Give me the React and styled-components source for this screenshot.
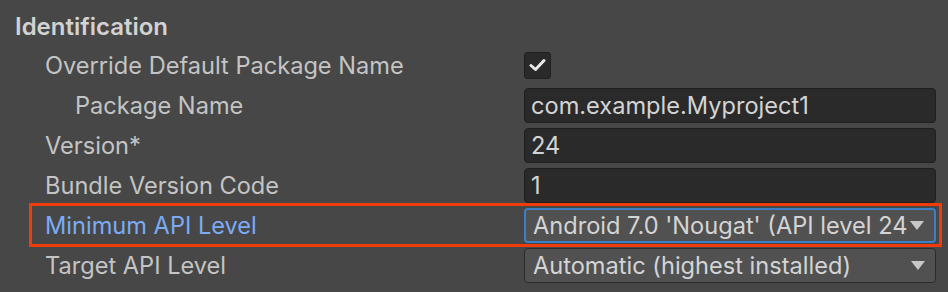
import React from "react";
import styled, { createGlobalStyle, css } from "styled-components";

const GlobalStyle = createGlobalStyle`
  html, body {
    margin: 0;
    padding: 0;
    background: #474747;
  }
  body {
    font-family: Inter, "Noto Sans", "Liberation Sans", sans-serif;
    color: #c4c4c4;
  }
`;

const Panel = styled.div`
  width: 948px;
  height: 292px;
  box-sizing: border-box;
  padding: 7px 0 0 0;
  background: #474747;
  overflow: hidden;
`;

const Header = styled.div`
  height: 38px;
  display: flex;
  align-items: center;
  padding-left: 15px;
  font-size: 24px;
  font-weight: 600;
  color: #d2d2d2;
`;

const Rows = styled.div`
  display: flex;
  flex-direction: column;
  margin-left: 31px;
  width: 909px;
`;

const Row = styled.div`
  height: 40px;
  display: grid;
  grid-template-columns: 493px minmax(0, 1fr);
  align-items: center;
  padding-right: 4px;
  ${(p) =>
    p.$highlight &&
    css`
      outline: 3px solid #f03c0a;
      outline-offset: -1px;
    `}
`;

const Label = styled.div`
  padding-left: ${(p) => 14 + (p.$indent || 0) * 30}px;
  font-size: 23.6px;
  color: ${(p) => (p.$active ? "#7babf5" : "#c4c4c4")};
  white-space: nowrap;
`;

const TextField = styled.div`
  height: 35px;
  box-sizing: border-box;
  display: flex;
  align-items: center;
  padding-left: 6px;
  background: #2a2a2a;
  border: 1px solid #1f1f1f;
  border-radius: 4px;
  font-size: 23.6px;
  color: #d4d4d4;
  white-space: nowrap;
  overflow: hidden;
`;

const Checkbox = styled.div`
  width: 27px;
  height: 27px;
  box-sizing: border-box;
  display: flex;
  align-items: center;
  justify-content: center;
  background: #2a2a2a;
  border: 1px solid #202020;
  border-radius: 3px;
`;

const Dropdown = styled.div`
  min-width: 0;
  height: 35px;
  box-sizing: border-box;
  display: flex;
  align-items: center;
  padding: 0 10px 0 ${(p) => (p.$focused ? 7 : 8)}px;
  background: #515151;
  border: ${(p) => (p.$focused ? "2px solid #3c7fc6" : "1px solid #2b2b2b")};
  border-radius: 4px;
  font-size: 23.6px;
  color: #d4d4d4;
`;

const DropdownText = styled.span`
  flex: 1;
  min-width: 0;
  white-space: nowrap;
`;

const Arrow = styled.svg`
  flex: none;
  width: 14px;
  height: 9px;
  margin-left: 3px;
`;

function Check() {
  return (
    <svg width="17" height="14" viewBox="0 0 17 14">
      <path
        d="M2 7.5 L6.5 11.5 L15 2.5"
        fill="none"
        stroke="#e8e8e8"
        strokeWidth="3"
        strokeLinecap="round"
        strokeLinejoin="round"
      />
    </svg>
  );
}

function DownArrow() {
  return (
    <Arrow viewBox="0 0 14 9">
      <path d="M0 0 H14 L7 9 Z" fill="#c8c8c8" />
    </Arrow>
  );
}

export default function App() {
  return (
    <>
      <GlobalStyle />
      <Panel>
        <Header>Identification</Header>
        <Rows>
          <Row>
            <Label>Override Default Package Name</Label>
            <div>
              <Checkbox>
                <Check />
              </Checkbox>
            </div>
          </Row>
          <Row>
            <Label $indent={1}>Package Name</Label>
            <TextField>com.example.Myproject1</TextField>
          </Row>
          <Row>
            <Label>Version*</Label>
            <TextField>24</TextField>
          </Row>
          <Row>
            <Label>Bundle Version Code</Label>
            <TextField>1</TextField>
          </Row>
          <Row $highlight>
            <Label $active>Minimum API Level</Label>
            <Dropdown $focused>
              <DropdownText>Android 7.0 'Nougat' (API level 24</DropdownText>
              <DownArrow />
            </Dropdown>
          </Row>
          <Row>
            <Label>Target API Level</Label>
            <Dropdown>
              <DropdownText>Automatic (highest installed)</DropdownText>
              <DownArrow />
            </Dropdown>
          </Row>
        </Rows>
      </Panel>
    </>
  );
}
